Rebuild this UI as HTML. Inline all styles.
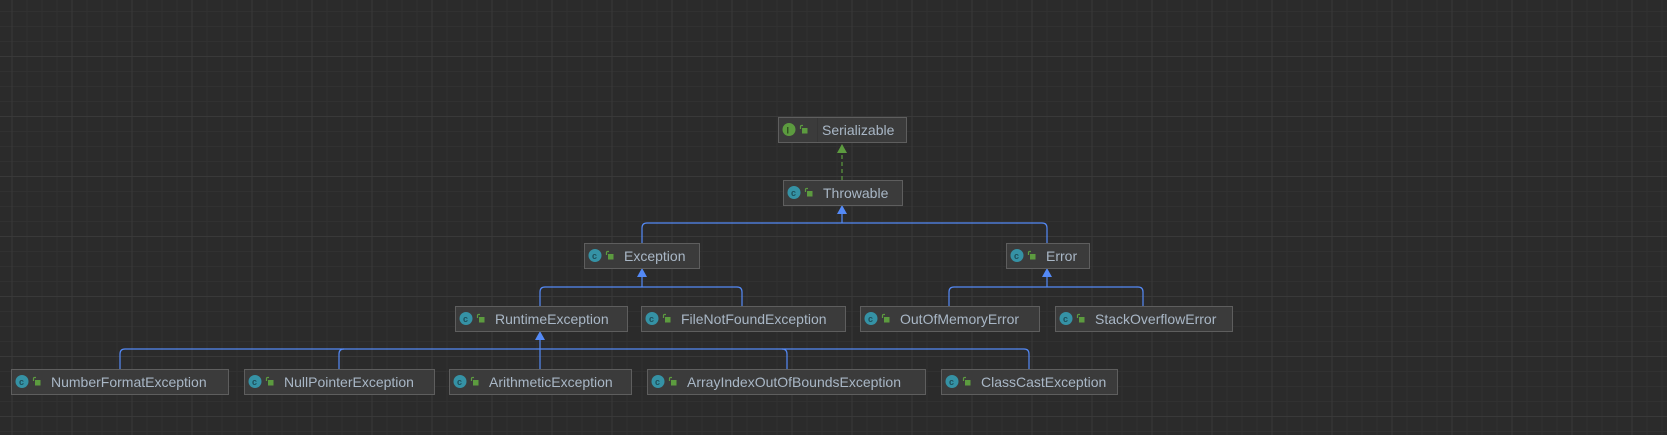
<!DOCTYPE html>
<html><head><meta charset="utf-8"><style>
html,body{margin:0;padding:0;background:#2b2b2b;}
svg{display:block;}
text{font-family:"Liberation Sans",sans-serif;font-size:14px;fill:#a9b7c6;}
</style></head><body>
<svg width="1667" height="435" xmlns="http://www.w3.org/2000/svg">
<defs>
<pattern id="minor" x="11.5" y="11" width="15" height="15" patternUnits="userSpaceOnUse">
<path d="M0.5 0V15M0 0.5H15" stroke="#313131" stroke-width="1" fill="none"/>
</pattern>
<pattern id="major" x="11.5" y="56" width="60" height="60" patternUnits="userSpaceOnUse">
<path d="M0.5 0V60M0 0.5H60" stroke="#393939" stroke-width="1" fill="none"/>
</pattern>
<g id="lock"><path d="M0.5 4V1.5Q0.5 0.5 1.5 0.5H3" stroke="#5c9b3f" fill="none" stroke-width="1.2"/><rect x="2" y="3" width="5.5" height="5.5" fill="#5c9b3f"/></g>
</defs>
<rect width="1667" height="435" fill="#2b2b2b"/>
<rect width="1667" height="435" fill="url(#minor)"/>
<rect width="1667" height="435" fill="url(#major)"/>

<g stroke="#548af7" stroke-width="1.2" fill="none">
<!-- Throwable children -->
<path d="M642 243V228Q642 223 647 223H1042Q1047 223 1047 228V243"/>
<path d="M842 207V223"/>
<!-- Exception children -->
<path d="M540 306V292Q540 287 545 287H737Q742 287 742 292V306"/>
<path d="M642 270V287"/>
<!-- Error children -->
<path d="M949 306V292Q949 287 954 287H1138Q1143 287 1143 292V306"/>
<path d="M1047 270V287"/>
<!-- Runtime children -->
<path d="M120 369V354Q120 349 125 349H1024Q1029 349 1029 354V369"/>
<path d="M339 369V354Q339 349 344 349"/>
<path d="M787 369V354Q787 349 782 349"/>
<path d="M540 333V369"/>
</g>
<g fill="#548af7">
<path d="M842 205L837 214H847Z"/>
<path d="M642 268L637 277H647Z"/>
<path d="M1047 268L1042 277H1052Z"/>
<path d="M540 331L535 340H545Z"/>
</g>
<path d="M842 180V152" stroke="#5c9b3f" stroke-width="1.2" stroke-dasharray="4,3" fill="none"/>
<path d="M842 144L837 153H847Z" fill="#5c9b3f"/>

<g id="boxes">
<!-- Serializable -->
<rect x="778.5" y="117.5" width="128" height="25" fill="#3b3b3b" stroke="#5e5e5e"/>
<line x1="817.5" y1="118" x2="817.5" y2="142" stroke="#353535"/>
<circle cx="789" cy="129.5" r="6.5" fill="#5c9b3f"/><text x="786.5" y="133.5" style="font-size:9px;fill:#2b4a1d;font-weight:bold">I</text>
<use href="#lock" x="800" y="125"/>
<text x="822" y="135">Serializable</text>
</g>

<g>
<rect x="783.5" y="180.5" width="119" height="25" fill="#3b3b3b" stroke="#5e5e5e"/>
<circle cx="794" cy="192.5" r="6.5" fill="#3592a5"/><text x="791" y="196" style="font-size:9px;fill:#1e4f5a;font-weight:bold">c</text>
<use href="#lock" x="805" y="188"/>
<text x="823" y="198">Throwable</text>
</g>

<g>
<rect x="584.5" y="243.5" width="115" height="25" fill="#3b3b3b" stroke="#5e5e5e"/>
<circle cx="595" cy="255.5" r="6.5" fill="#3592a5"/><text x="592" y="259" style="font-size:9px;fill:#1e4f5a;font-weight:bold">c</text>
<use href="#lock" x="606" y="251"/>
<text x="624" y="261">Exception</text>
</g>

<g>
<rect x="1006.5" y="243.5" width="83" height="25" fill="#3b3b3b" stroke="#5e5e5e"/>
<circle cx="1017" cy="255.5" r="6.5" fill="#3592a5"/><text x="1014" y="259" style="font-size:9px;fill:#1e4f5a;font-weight:bold">c</text>
<use href="#lock" x="1028" y="251"/>
<text x="1046" y="261">Error</text>
</g>

<g>
<rect x="455.5" y="306.5" width="172" height="25" fill="#3b3b3b" stroke="#5e5e5e"/>
<circle cx="466" cy="318.5" r="6.5" fill="#3592a5"/><text x="463" y="322" style="font-size:9px;fill:#1e4f5a;font-weight:bold">c</text>
<use href="#lock" x="477" y="314"/>
<text x="495" y="324">RuntimeException</text>
</g>

<g>
<rect x="641.5" y="306.5" width="204" height="25" fill="#3b3b3b" stroke="#5e5e5e"/>
<circle cx="652" cy="318.5" r="6.5" fill="#3592a5"/><text x="649" y="322" style="font-size:9px;fill:#1e4f5a;font-weight:bold">c</text>
<use href="#lock" x="663" y="314"/>
<text x="681" y="324">FileNotFoundException</text>
</g>

<g>
<rect x="860.5" y="306.5" width="179" height="25" fill="#3b3b3b" stroke="#5e5e5e"/>
<circle cx="871" cy="318.5" r="6.5" fill="#3592a5"/><text x="868" y="322" style="font-size:9px;fill:#1e4f5a;font-weight:bold">c</text>
<use href="#lock" x="882" y="314"/>
<text x="900" y="324">OutOfMemoryError</text>
</g>

<g>
<rect x="1055.5" y="306.5" width="177" height="25" fill="#3b3b3b" stroke="#5e5e5e"/>
<circle cx="1066" cy="318.5" r="6.5" fill="#3592a5"/><text x="1063" y="322" style="font-size:9px;fill:#1e4f5a;font-weight:bold">c</text>
<use href="#lock" x="1077" y="314"/>
<text x="1095" y="324">StackOverflowError</text>
</g>

<g>
<rect x="11.5" y="369.5" width="217" height="25" fill="#3b3b3b" stroke="#5e5e5e"/>
<circle cx="22" cy="381.5" r="6.5" fill="#3592a5"/><text x="19" y="385" style="font-size:9px;fill:#1e4f5a;font-weight:bold">c</text>
<use href="#lock" x="33" y="377"/>
<text x="51" y="387">NumberFormatException</text>
</g>

<g>
<rect x="244.5" y="369.5" width="190" height="25" fill="#3b3b3b" stroke="#5e5e5e"/>
<circle cx="255" cy="381.5" r="6.5" fill="#3592a5"/><text x="252" y="385" style="font-size:9px;fill:#1e4f5a;font-weight:bold">c</text>
<use href="#lock" x="266" y="377"/>
<text x="284" y="387">NullPointerException</text>
</g>

<g>
<rect x="449.5" y="369.5" width="182" height="25" fill="#3b3b3b" stroke="#5e5e5e"/>
<circle cx="460" cy="381.5" r="6.5" fill="#3592a5"/><text x="457" y="385" style="font-size:9px;fill:#1e4f5a;font-weight:bold">c</text>
<use href="#lock" x="471" y="377"/>
<text x="489" y="387">ArithmeticException</text>
</g>

<g>
<rect x="647.5" y="369.5" width="278" height="25" fill="#3b3b3b" stroke="#5e5e5e"/>
<circle cx="658" cy="381.5" r="6.5" fill="#3592a5"/><text x="655" y="385" style="font-size:9px;fill:#1e4f5a;font-weight:bold">c</text>
<use href="#lock" x="669" y="377"/>
<text x="687" y="387">ArrayIndexOutOfBoundsException</text>
</g>

<g>
<rect x="941.5" y="369.5" width="176" height="25" fill="#3b3b3b" stroke="#5e5e5e"/>
<circle cx="952" cy="381.5" r="6.5" fill="#3592a5"/><text x="949" y="385" style="font-size:9px;fill:#1e4f5a;font-weight:bold">c</text>
<use href="#lock" x="963" y="377"/>
<text x="981" y="387">ClassCastException</text>
</g>
</svg>
</body></html>
